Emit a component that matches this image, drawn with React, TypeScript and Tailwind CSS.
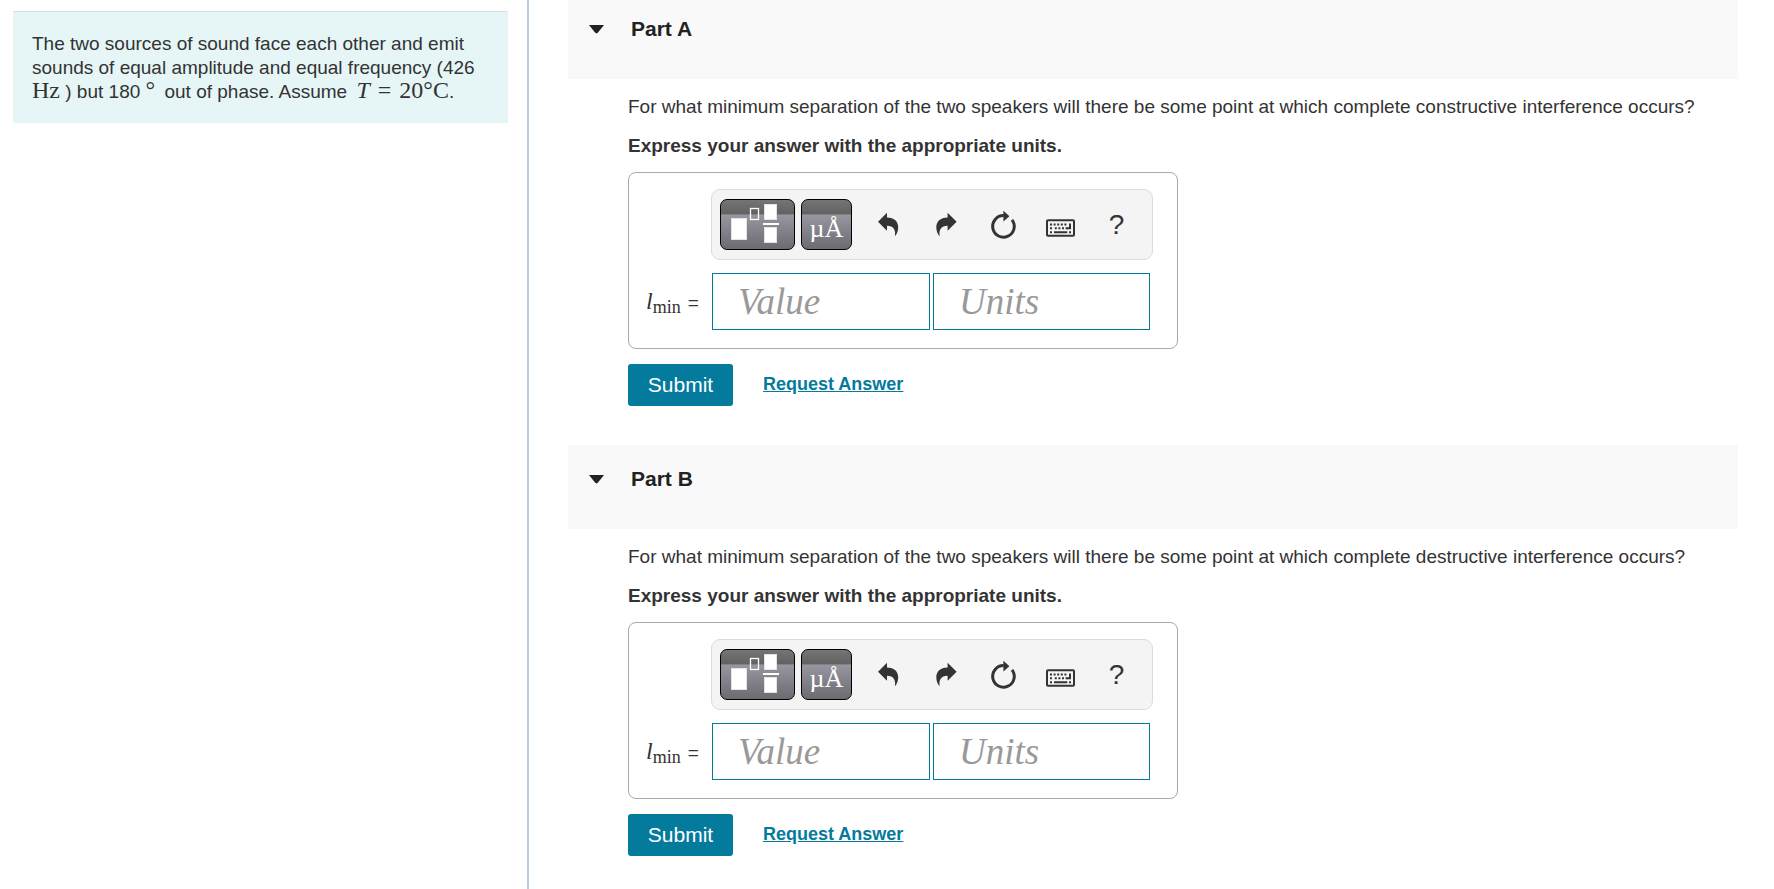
import React from "react";

const serif = "font-['Liberation_Serif',serif]";

function TemplatesIcon() {
  return (
    <svg width="73" height="49" viewBox="1 1 73 49" aria-hidden="true">
      <g fill="#fff" stroke="#e4e4e7" strokeWidth="1">
        <rect x="11.5" y="19.5" width="15" height="21" />
        <rect x="44.5" y="5.5" width="12" height="15" />
        <rect x="44.5" y="28.5" width="12" height="15" />
      </g>
      <rect x="30.5" y="9.5" width="8" height="11" fill="none" stroke="#fff" strokeWidth="1.3" />
      <rect x="43" y="24" width="16" height="2" fill="#fff" />
    </svg>
  );
}

function UndoIcon() {
  return (
    <svg width="33" height="33" viewBox="0 0 33 33" fill="#333" aria-hidden="true">
      <path d="M6 13.7 15 4.7V9.4C22.5 9.6 26.2 13.6 26.2 19.2C26.2 22.8 25 25.8 22.9 28.3C23.9 22.2 21.8 18 15 17.8V22.7Z" />
    </svg>
  );
}

function RedoIcon() {
  return (
    <svg width="33" height="33" viewBox="0 0 33 33" fill="#333" aria-hidden="true">
      <path d="M27.6 13.7 18.6 4.7V9.4C11.1 9.6 7.3 13.6 7.3 19.2C7.3 22.8 8.5 25.8 10.7 28.3C9.7 22.2 11.8 18 18.6 17.8V22.7Z" />
    </svg>
  );
}

function ResetIcon() {
  return (
    <svg width="33" height="33" viewBox="0 0 33 33" aria-hidden="true">
      <path d="M26 11.8A10.8 10.8 0 1 1 17.8 7.6" fill="none" stroke="#333" strokeWidth="3" />
      <path d="M17.4 2.8 23.4 8.2 17.4 13.4Z" fill="#333" />
    </svg>
  );
}

function KeyboardIcon() {
  return (
    <svg width="33" height="33" viewBox="0 0 33 33" aria-hidden="true">
      <rect x="4" y="12.2" width="27" height="15.6" rx="1" fill="none" stroke="#333" strokeWidth="2" />
      <path d="M7 16.5H24.5" stroke="#333" strokeWidth="2" strokeDasharray="2 1.6" />
      <path d="M7 20.3H9.8M11.8 20.3H25" stroke="#333" strokeWidth="2" strokeDasharray="2 1.6" />
      <path d="M27 15.5V20.3H24" fill="none" stroke="#333" strokeWidth="2" />
      <path d="M7 24.3H9M11 24.3H24.3M26 24.3H28" stroke="#333" strokeWidth="2" />
    </svg>
  );
}

const darkKey =
  "flex h-[51px] items-center justify-center rounded-[7px] border border-black bg-[linear-gradient(to_bottom,#757575_0%,#616161_29%,#9896a0_30%,#6c6b70_100%)] text-white";

function ToolButton({ label, children }: { label: string; children: React.ReactNode }) {
  return (
    <button type="button" aria-label={label} className="flex h-[51px] w-[57px] items-center justify-center text-[#333]">
      {children}
    </button>
  );
}

function Toolbar() {
  return (
    <div role="toolbar" aria-label="Math input" className="ml-[82px] flex w-[442px] rounded-[9px] border border-[#dcdcdc] bg-[#f4f4f4] py-[9px] pl-2">
      <button type="button" aria-label="Templates" className={`${darkKey} w-[75px]`}>
        <TemplatesIcon />
      </button>
      <button type="button" aria-label="Units symbols" className={`${darkKey} ml-1.5 mr-2 w-[51px] pt-2 text-[26px] leading-8 ${serif}`}>
        µÅ
      </button>
      <ToolButton label="Undo"><UndoIcon /></ToolButton>
      <ToolButton label="Redo"><RedoIcon /></ToolButton>
      <ToolButton label="Reset"><ResetIcon /></ToolButton>
      <ToolButton label="Keyboard shortcuts"><KeyboardIcon /></ToolButton>
      <ToolButton label="Help"><span className="text-[28px] leading-8">?</span></ToolButton>
    </div>
  );
}

const field =
  "h-[57px] border border-[#047a9c] bg-white pl-[25px] text-[37px] italic text-[#333] placeholder:text-[#999] placeholder:opacity-100 outline-none";

function Part({ id, kind, first }: { id: string; kind: string; first?: boolean }) {
  return (
    <section className="pb-[39px]">
      <header className={`flex items-center bg-[#f9f9f9] pb-9 pl-[21px] ${first ? "pt-[15px]" : "pt-5"}`}>
        <button type="button" aria-label={`Collapse Part ${id}`} className="flex h-7 w-[42px] items-center">
          <svg width="15" height="9" viewBox="0 0 15 9" fill="#222" aria-hidden="true">
            <path d="M0 0H15L9 7.6Q7.5 9.2 6 7.6Z" />
          </svg>
        </button>
        <h2 className="text-[21px] font-bold leading-7 text-[#222]">Part {id}</h2>
      </header>
      <div className="pl-[60px] pt-4">
        <p>
          For what minimum separation of the two speakers will there be some point at which complete {kind} interference occurs?
        </p>
        <p className="mt-[15px] font-bold">Express your answer with the appropriate units.</p>
        <div className="mt-3.5 w-[550px] rounded-lg border border-[#a9a9a9] pb-[18px] pt-4">
          <Toolbar />
          <div className="mt-[13px] flex items-center">
            <label htmlFor={`value-${id}`} className="flex w-[83px] items-baseline pl-[17px]">
              <span className={`text-[24px] italic ${serif}`}>l</span>
              <sub className={`bottom-[-4px] text-[18px] leading-none ${serif}`}>min</sub>
              <span className="ml-[7px]">=</span>
            </label>
            <input id={`value-${id}`} type="text" placeholder="Value" className={`${field} w-[218px] ${serif}`} />
            <input aria-label="Units" type="text" placeholder="Units" className={`${field} ml-[3px] w-[217px] ${serif}`} />
          </div>
        </div>
        <div className="mt-[15px] flex items-center gap-[30px]">
          <button type="button" className="h-[42px] w-[105px] rounded-[3px] bg-[#047a9c] text-[21px] text-white">
            Submit
          </button>
          <a href="#answer" className="pb-0.5 text-[18px] font-bold text-[#047a9c] underline">
            Request Answer
          </a>
        </div>
      </div>
    </section>
  );
}

export default function App() {
  return (
    <div className="flex min-h-screen bg-white font-['Liberation_Sans',Arial,sans-serif] text-[19px] leading-6 text-[#333]">
      <aside className="w-[529px] shrink-0 border-r-2 border-[#b8cbdf] pl-[13px] pr-[19px] pt-[11px]">
        <p className="border-t border-[#d9e0e0] bg-[#e6f6f6] pb-[19px] pl-[19px] pr-4 pt-5">
          The two sources of sound face each other and emit sounds of equal amplitude and equal frequency (426{" "}
          <span className={`text-[24px] leading-[0] ${serif}`}>Hz</span> ) but 180{" "}
          <span className={`mr-1 text-[24px] leading-[0] ${serif}`}>°</span> out of phase. Assume{" "}
          <span className={`ml-1 whitespace-nowrap text-[24px] leading-[0] ${serif}`}>
            <i>T</i> <span className="mx-0.5">=</span> 20°C
          </span>
          .
        </p>
      </aside>
      <main className="min-w-0 flex-1 pl-[39px] pr-9">
        <Part id="A" kind="constructive" first />
        <Part id="B" kind="destructive" />
      </main>
    </div>
  );
}
